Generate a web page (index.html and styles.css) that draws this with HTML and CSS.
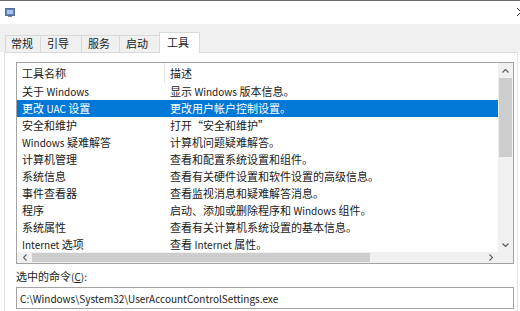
FILE: index.html
```html
<!DOCTYPE html>
<html lang="zh-CN">
<head>
<meta charset="utf-8">
<title>系统配置</title>
<link rel="stylesheet" href="styles.css">
</head>
<body>
<div class="window">
  <div class="titlebar">
    <svg class="appicon" width="10" height="9" viewBox="0 0 10 9">
      <rect x="0.5" y="0.5" width="9" height="7" fill="#5b84c4" stroke="#5c6f8f"/>
      <rect x="2" y="2" width="6" height="4" fill="#a9c4ea"/>
      <rect x="3" y="8" width="4" height="1" fill="#7b8596"/>
    </svg>
    <svg class="close" width="10" height="10" viewBox="0 0 10 10">
      <path d="M1 1 L9 9 M9 1 L1 9" stroke="#333" stroke-width="1" fill="none"/>
    </svg>
  </div>
  <div class="tabstrip">
    <div class="tab">常规</div>
    <div class="tab">引导</div>
    <div class="tab">服务</div>
    <div class="tab">启动</div>
    <div class="tab active">工具</div>
  </div>
  <div class="panel">
    <div class="listbox">
      <div class="listarea">
        <div class="row header"><span class="c1">工具名称</span><span class="c2">描述</span></div>
        <div class="row"><span class="c1">关于 <span class="en">Windows</span></span><span class="c2">显示 <span class="en">Windows</span> 版本信息。</span></div>
        <div class="row selected"><span class="c1">更改 <span class="en">UAC</span> 设置</span><span class="c2">更改用户帐户控制设置。</span></div>
        <div class="row"><span class="c1">安全和维护</span><span class="c2">打开“安全和维护”</span></div>
        <div class="row"><span class="c1"><span class="en">Windows</span> 疑难解答</span><span class="c2">计算机问题疑难解答。</span></div>
        <div class="row"><span class="c1">计算机管理</span><span class="c2">查看和配置系统设置和组件。</span></div>
        <div class="row"><span class="c1">系统信息</span><span class="c2">查看有关硬件设置和软件设置的高级信息。</span></div>
        <div class="row"><span class="c1">事件查看器</span><span class="c2">查看监视消息和疑难解答消息。</span></div>
        <div class="row"><span class="c1">程序</span><span class="c2">启动、添加或删除程序和 <span class="en">Windows</span> 组件。</span></div>
        <div class="row"><span class="c1">系统属性</span><span class="c2">查看有关计算机系统设置的基本信息。</span></div>
        <div class="row"><span class="c1"><span class="en">Internet</span> 选项</span><span class="c2">查看 <span class="en">Internet</span> 属性。</span></div>
      </div>
      <div class="vscroll">
        <div class="arrow"><svg width="7" height="4" viewBox="0 0 7 4"><path d="M0.5 3.5 L3.5 0.5 L6.5 3.5" stroke="#606060" stroke-width="1.2" fill="none"/></svg></div>
        <div class="vthumb"></div>
        <div class="vtrack"></div>
        <div class="arrow"><svg width="7" height="4" viewBox="0 0 7 4"><path d="M0.5 0.5 L3.5 3.5 L6.5 0.5" stroke="#606060" stroke-width="1.2" fill="none"/></svg></div>
      </div>
      <div class="hscroll">
        <div class="harrow"><svg width="4" height="7" viewBox="0 0 4 7"><path d="M3.5 0.5 L0.5 3.5 L3.5 6.5" stroke="#606060" stroke-width="1.2" fill="none"/></svg></div>
        <div class="hthumb"></div>
        <div class="htrack"></div>
        <div class="harrow"><svg width="4" height="7" viewBox="0 0 4 7"><path d="M0.5 0.5 L3.5 3.5 L0.5 6.5" stroke="#606060" stroke-width="1.2" fill="none"/></svg></div>
      </div>
      <div class="corner"></div>
    </div>
    <div class="label">选中的命令<span class="en">(<u>C</u>):</span></div>
    <div class="textbox"><span class="en">C:\Windows\System32\UserAccountControlSettings.exe</span></div>
  </div>
</div>
</body>
</html>
```
FILE: styles.css
```css
* { box-sizing: border-box; }
html, body {
  margin: 0;
  padding: 0;
  width: 520px;
  height: 311px;
  overflow: hidden;
  background: #ffffff;
}
body {
  font-family: "Noto Sans CJK SC", "Noto Sans", sans-serif;
  font-size: 11px;
  color: #1a1a1a;
}
.en { font-size: 10px; }
.window {
  border-top: 1px solid #6b6b6b;
  height: 311px;
  display: flex;
  flex-direction: column;
}
.titlebar {
  height: 23px;
  background: #ffffff;
  display: flex;
  align-items: center;
  justify-content: space-between;
  padding-left: 5px;
  padding-bottom: 1px;
}
.appicon { display: block; }
.close { display: block; margin-right: -6px; }
.tabstrip {
  height: 28px;
  background: #f0f0f0;
  display: flex;
  align-items: flex-end;
  padding-left: 5px;
}
.tab {
  height: 17px;
  line-height: 15px;
  padding: 0 7px;
  border: 1px solid #d9d9d9;
  border-bottom: none;
  border-right: none;
  background: #f0f0f0;
  color: #1a1a1a;
  font-size: 11px;
}
.tab:nth-child(1) { width: 35px; padding: 0 5px; }
.tab:nth-child(2) { width: 41px; padding: 0 6px; }
.tab:nth-child(3) { width: 38px; padding: 0 6px; }
.tab:nth-child(4) { width: 40px; padding: 0 6px; }
.tab.active {
  width: 41px;
  height: 21px;
  line-height: 18px;
  background: #ffffff;
  border-right: 1px solid #d9d9d9;
  margin-bottom: -1px;
  position: relative;
}
.panel {
  flex: 1;
  background: #ffffff;
  border-top: 1px solid #d9d9d9;
  border-left: 1px solid #e3e3e3;
  border-right: 1px solid #e3e3e3;
  margin: 0 2px 0 4px;
  padding: 9px 2px 0 11px;
}
.listbox {
  width: 498px;
  height: 202px;
  border: 1px solid #a3a3a3;
  display: grid;
  grid-template-columns: 481px 15px;
  grid-template-rows: 189px 11px;
  background: #ffffff;
}
.listarea {
  overflow: hidden;
}
.row {
  height: 17px;
  line-height: 17px;
  display: flex;
  white-space: nowrap;
}
.row.header {
  height: 20px;
  line-height: 20px;
}
.c1 {
  width: 148px;
  padding-left: 5px;
  flex: none;
}
.c2 {
  padding-left: 5px;
}
.header .c1 { border-right: 1px solid #e5e5e5; }
.row.selected {
  background: #0078d7;
  color: #ffffff;
}
.vscroll {
  background: #f0f0f0;
  display: flex;
  flex-direction: column;
}
.arrow {
  height: 15px;
  display: flex;
  align-items: center;
  justify-content: center;
}
.vthumb {
  height: 79px;
  background: #cdcdcd;
  margin: 0 1px;
}
.vtrack { flex: 1; }
.hscroll {
  background: #f0f0f0;
  display: flex;
}
.harrow {
  width: 15px;
  display: flex;
  align-items: center;
  justify-content: center;
}
.hthumb {
  width: 338px;
  background: #cdcdcd;
  margin: 1px 0;
}
.htrack { flex: 1; }
.corner { background: #f0f0f0; }
.label {
  margin-top: 6px;
  height: 13px;
  line-height: 13px;
  padding-left: 0;
}
.label u { text-underline-offset: 1px; }
.textbox {
  margin-top: 4px;
  width: 498px;
  height: 22px;
  border: 1px solid #a3a3a3;
  line-height: 20px;
  padding-left: 3px;
  white-space: nowrap;
}
```
